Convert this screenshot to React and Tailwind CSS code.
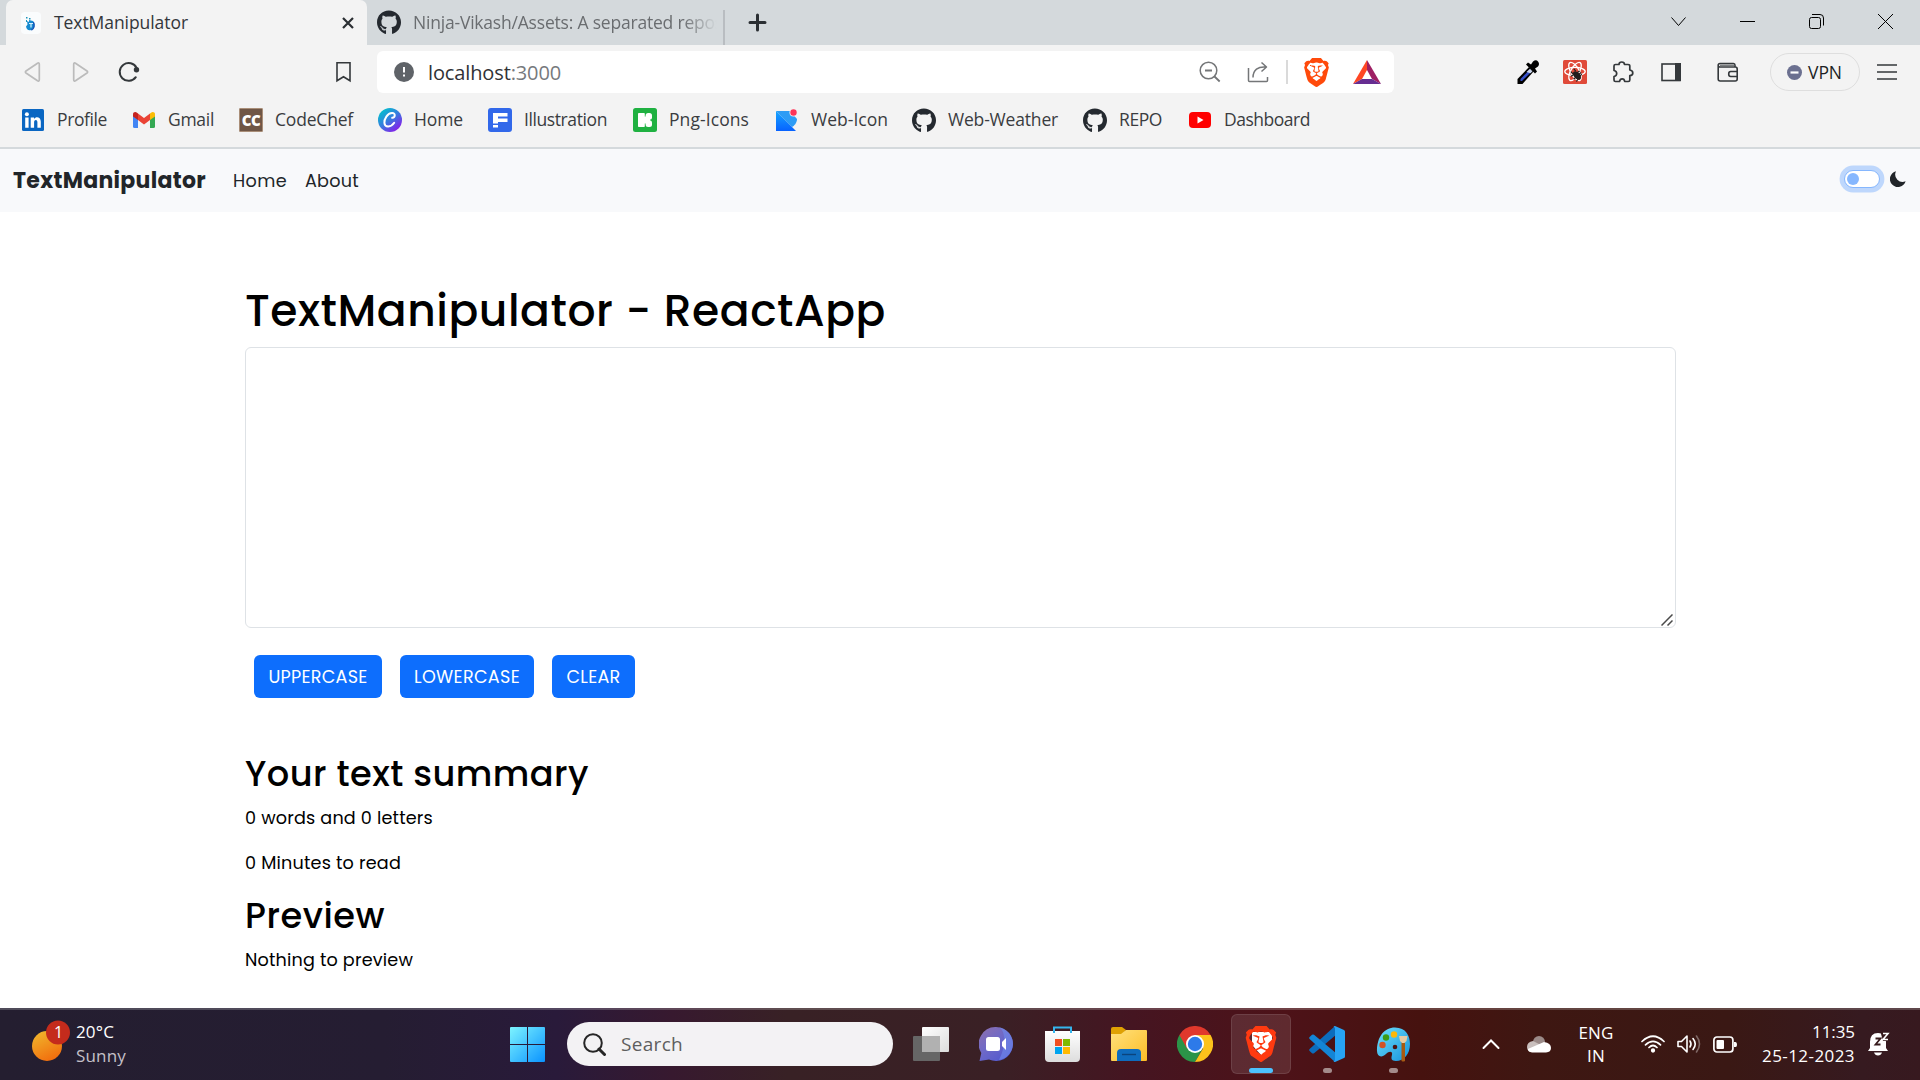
import { useLayoutEffect, useRef, useState } from "react";
import { FaGithub } from "react-icons/fa";
import { SiBrave } from "react-icons/si";

/* Single-line label whose tracking is adjusted so that its run is w px wide. */
function Label({ w, className = "", children }) {
  const ref = useRef(null);
  const [spacing, setSpacing] = useState(0);
  useLayoutEffect(() => {
    const natural = ref.current.getBoundingClientRect().width;
    setSpacing((w - natural) / ref.current.textContent.length);
  }, [w]);
  return (
    <span ref={ref} className={`inline-block shrink-0 whitespace-nowrap ${className}`} style={{ letterSpacing: spacing }}>
      {children}
    </span>
  );
}

function TabStrip() {
  return (
    <div className="flex h-[45px] bg-[#d4d9dc] pl-[6px]">
      <div className="flex w-[361px] items-center rounded-t-[7px] bg-[#f3f3f3] pl-[15px]">
        <svg className="h-[22px] w-[20px]" viewBox="0 0 20 22">
          <rect width="20" height="22" rx="4" fill="#fafcfd" />
          <path d="M6 9l2 1V8l4 1c2 2 2 7-2 9-3 .8-4.500-1-5-3.500l1.500-2z" fill="#168bd0" />
          <path d="M8 11.500h4M10 11.500v4" stroke="#d6f2ff" strokeWidth="1.200" />
          <path d="M5 5h1.500v1.500H5zM8 6h1.500v1.500H8zM5 8h1v2H5z" fill="#1b94bb" />
          <path d="M12.300 10c1.700 3 1 6.500-2 8" stroke="#1456b8" strokeWidth="1.500" fill="none" />
        </svg>
        <Label w={134} className="ml-[13px] pb-px text-[17.5px] leading-6 font-medium text-[#33373b]">TextManipulator</Label>
        <svg className="ml-[154px] h-3 w-3" viewBox="0 0 12 12" stroke="#2b2f33" strokeWidth="2.200"><path d="M1 1l10 10M11 1L1 11" /></svg>
      </div>
      <div className="flex w-[358px] items-center border-r-2 border-[#b9bdc1] bg-[#d4d9dc] pl-[10px] [border-image:linear-gradient(transparent_24%,#b9bdc1_24%)_1]">
        <FaGithub className="h-[25px] w-[24px] shrink-0 text-[#24292f]" />
        <div className="ml-3 w-[310px] shrink-0 [mask-image:linear-gradient(90deg,#000_87%,transparent_98%)]">
          <Label w={310} className="text-[17.5px] leading-6 text-[#6a6d70]">Ninja-Vikash/Assets: A separated repos</Label>
        </div>
      </div>
      <svg className="mt-[13px] ml-[23px] h-[19px] w-[19px]" viewBox="0 0 19 19" stroke="#2b2f33" strokeWidth="3" strokeLinecap="round"><path d="M9.500 2v15M2 9.500h15" /></svg>
      <div className="mt-[13px] mr-[26px] ml-auto flex h-[17px] items-center text-black">
        <svg className="h-[17px] w-[17px]" viewBox="0 0 17 17" fill="none" stroke="currentColor"><path d="M1.500 4.500l7 8 7-8" /></svg>
        <svg className="ml-[52px] h-[17px] w-[17px]" viewBox="0 0 17 17" stroke="currentColor"><path d="M1 8.500h15" /></svg>
        <svg className="ml-[52px] h-[17px] w-[17px]" viewBox="0 0 17 17" fill="none" stroke="currentColor"><rect x="1.500" y="4.500" width="11" height="11" rx="2" /><path d="M4 1.500h8a3.500 3.500 0 0 1 3.500 3.500v7.500" /></svg>
        <svg className="ml-[52px] h-[17px] w-[17px]" viewBox="0 0 17 17" stroke="currentColor"><path d="M1 1l15 15M16 1L1 16" /></svg>
      </div>
    </div>
  );
}

function Toolbar() {
  return (
    <div className="flex h-[54px] items-center pl-[24px]">
      <svg className="h-[22px] w-[18px]" viewBox="0 0 18 22" fill="none" stroke="#bbb" strokeWidth="1.700" strokeLinejoin="round"><path d="M13.500 2.200L2 10c-.8.600-.8 1.400 0 2l11.500 7.800c1 .6 1.800.2 1.800-1V3.200c0-1.200-.8-1.600-1.800-1z" /></svg>
      <svg className="ml-[30px] h-[22px] w-[18px]" viewBox="0 0 18 22" fill="none" stroke="#bbb" strokeWidth="1.700" strokeLinejoin="round"><path d="M3.500 2.200L15 10c.8.600.8 1.400 0 2L3.500 19.800c-1 .6-1.800.2-1.800-1V3.200c0-1.200.8-1.600 1.800-1z" /></svg>
      <svg className="ml-[28px] h-[22px] w-[22px]" viewBox="0 0 22 22" fill="none"><path d="M17.800 16.200A8.900 8.900 0 1 1 18.600 7" stroke="#34383b" strokeWidth="2" strokeLinecap="round" /><circle cx="18.500" cy="8.800" r="2.700" fill="#34383b" /></svg>
      <svg className="ml-[195px] h-[22px] w-[17px]" viewBox="0 0 17 22" fill="none" stroke="#34383b" strokeWidth="1.600"><path d="M2 1.800h13v18l-6.500-4-6.500 4z" /></svg>
      <div className="ml-[25px] flex h-[42px] w-[1017px] items-center rounded-[6px] bg-white pl-[17px]">
        <svg className="h-5 w-5" viewBox="0 0 20 20"><circle cx="10" cy="10" r="10" fill="#5f6368" /><path d="M10 5v5.500M10 12.500v2" stroke="white" strokeWidth="2" /></svg>
        <Label w={133} className="ml-[14px] pt-px text-[20px] leading-7 text-[#303236]">localhost<span className="text-[#76797d]">:3000</span></Label>
        <svg className="ml-[638px] h-[22px] w-[22px]" viewBox="0 0 22 22" fill="none" stroke="#747678" strokeWidth="1.500"><circle cx="9.500" cy="9.500" r="8.300" /><path d="M6 9.500h7M15.500 15.500l5.200 5" strokeWidth="1.800" /></svg>
        <svg className="ml-[26px] h-[22px] w-[22px]" viewBox="0 0 22 22" fill="none" stroke="#747678" strokeWidth="1.500" strokeLinejoin="round"><path d="M1.500 7v12.500q0 1 1 1h17q1 0 1-1V16M6 16.500C6 9 11 5.200 19 6M14.500 1.500l5 4.500-5 4.500" /></svg>
        <div className="ml-[17px] h-6 w-[2px] bg-[#dadada]" />
        <SiBrave className="ml-[14px] h-[29px] w-[29px] text-[#ff4a0b]" />
        <svg className="ml-[22px] h-6 w-[28px]" viewBox="0 0 28 24"><path d="M14 0L0 24l9-5 5-9z" fill="#ff4724" /><path d="M14 0l14 24-9-5-5-9z" fill="#9e1f63" /><path d="M0 24h28l-9-5H9z" fill="#662d91" /></svg>
      </div>
      <svg className="ml-[122px] h-[25px] w-[24px]" viewBox="0 0 24 25"><path d="M1.500 24v-5L13 7l4.500 4.500L6.500 24z" fill="#000" /><path d="M4.500 21v-2L13 10.200l2 2L6 21z" fill="#3650c8" /><path d="M10.500 12l3.500-3.300 2.500 2.500-2 2z" fill="#cbd6ee" /><path d="M10 4.500l2-2 3 2 2-3q3-2.500 5 0t0 5l-3 2 2 3-2 2z" fill="#000" /></svg>
      <svg className="ml-[23px] h-6 w-6" viewBox="0 0 24 24"><rect width="24" height="24" rx="1.500" fill="#e04a39" /><g fill="none" stroke="white" strokeWidth="1.300"><ellipse cx="12" cy="11.500" rx="10.200" ry="4.200" /><ellipse cx="12" cy="11.500" rx="10.200" ry="4.200" transform="rotate(60 12 11.500)" /><ellipse cx="12" cy="11.500" rx="10.200" ry="4.200" transform="rotate(120 12 11.500)" /></g><g transform="rotate(-42 14 15.500)"><ellipse cx="14" cy="15.500" rx="3" ry="5" fill="#211e1e" /><path d="M9 12l10 2M9 16h10M9.500 19.500l9-2M12 8.500v3M16 8.500v3" stroke="#211e1e" strokeWidth="1.200" /></g></svg>
      <svg className="ml-[25px] h-[22px] w-[22px]" viewBox="0 0 22 22" fill="none" stroke="#34383b" strokeWidth="1.700" strokeLinejoin="round"><path d="M2 5q0-1.500 1.500-1.500H7q0-2.500 2.700-2.500t2.800 2.500H16q1.800 0 1.800 1.500V9q3 .5 3 2.900t-3 2.800V19q0 1.500-1.500 1.500h-3.600q-.3-2.700-2.500-2.700T7.500 20.500H3.500Q2 20.500 2 19v-3.500q2.700-.8 2.700-3.100T2 9.500z" /></svg>
      <svg className="ml-[27px] h-[20px] w-[20px]" viewBox="0 0 20 20"><rect x="1" y="2" width="18" height="16.500" fill="none" stroke="#34383b" strokeWidth="1.600" /><path d="M14 1h6v18h-6z" fill="#34383b" /></svg>
      <svg className="ml-[36px] h-[21px] w-[22px]" viewBox="0 0 22 21" fill="none" stroke="#34383b" strokeWidth="1.600"><path d="M18 5V3.200Q18 1.500 16.500 1.500H3Q1.200 1.500 1.200 3.200V17q0 2 2 2h15q2 0 2-2V7q0-2-2-2H3Q1.200 5 1.200 3.200M20.200 9.500h-6.500q-2 0-2 2.500t2 2.500h6.500" /><path d="M3 3.300h14" stroke="#7b7e80" /></svg>
      <div className="ml-[31px] flex h-[38px] w-[90px] items-center rounded-full border border-[#dedede] pl-[16px]">
        <svg className="h-[15px] w-[15px]" viewBox="0 0 15 15"><circle cx="7.500" cy="7.500" r="7.500" fill="#6b7090" /><path d="M3.500 7.500h8" stroke="white" strokeWidth="2.200" /></svg>
        <Label w={34} className="ml-[6px] text-[17.5px] leading-6 text-[#1d1f25]">VPN</Label>
      </div>
      <svg className="ml-[17px] h-4 w-5" viewBox="0 0 20 16" stroke="#34383b" strokeWidth="1.700"><path d="M0 1h20M0 8h20M0 15h20" /></svg>
    </div>
  );
}

const icon = "h-6 w-6 shrink-0";
const LinkedIn = () => (
  <svg className={icon} viewBox="0 0 24 24"><rect x="1" y="1" width="22" height="22" rx="1.500" fill="#0a66c2" /><g fill="white"><circle cx="5.900" cy="6.200" r="2" /><path d="M4.200 9.500h3.400v10.200H4.200zM9.700 9.500H13v1.400c2-2.700 6.800-2 6.800 2.800v6h-3.400v-5.500c0-3-3.300-2.700-3.300 0v5.500H9.700z" /></g></svg>
);
const Gmail = () => (
  <svg className={icon} viewBox="0 0 24 24"><path d="M1 7v11.500q0 1.500 1.500 1.500H6V10z" fill="#4285f4" /><path d="M18 10v10h3.500q1.500 0 1.500-1.500V7z" fill="#34a853" /><path d="M6 5.500l6 4.500 6-4.500V12l-6 4.500L6 12z" fill="#ea4335" /><path d="M1 6.500C1 4 3.500 3.500 5 4.700l1 .8V12L1 8.500z" fill="#c5221f" /><path d="M23 6.500c0-2.500-2.500-3-4-1.800l-1 .8V12l5-3.500z" fill="#fbbc04" /></svg>
);
const CodeChef = () => (
  <span className="flex h-6 w-6 shrink-0 items-center justify-center rounded-[1px] border border-[#a98e78] bg-[#6f5646] text-[15px] leading-none font-extrabold tracking-[-0.5px] text-white">CC</span>
);
const Canva = () => (
  <svg className={icon} viewBox="0 0 24 24"><defs><linearGradient id="canva" x1="0" y1="0" x2=".8" y2="1"><stop offset=".1" stopColor="#00c4cc" /><stop offset=".55" stopColor="#3a78e0" /><stop offset=".9" stopColor="#7d2ae8" /></linearGradient></defs><circle cx="12" cy="12" r="12" fill="url(#canva)" /><path d="M14.200 9.800c3.200-.3 3.600-5-.2-4.800C9.500 5.200 6 11 6.400 15c.5 5 6.600 4.500 9.800-.2" fill="none" stroke="white" strokeWidth="2" strokeLinecap="round" /></svg>
);
const Freepik = () => (
  <svg className={icon} viewBox="0 0 24 24"><rect width="24" height="24" rx="3" fill="#3268ea" /><path d="M5 5h14.500v3.500H10v2h9.500V14H10v1.500H5zM5 17h5v2.500H5z" fill="white" /></svg>
);
const Icons8 = () => (
  <svg className={icon} viewBox="0 0 24 24"><rect width="24" height="24" rx="2.500" fill="#1fb141" /><rect x="5" y="5" width="6.800" height="14" rx=".8" fill="white" /><rect x="12.600" y="5" width="6.400" height="6.800" rx="2.500" fill="white" /><rect x="12.600" y="12.200" width="6.400" height="6.800" rx="2.500" fill="white" /><path d="M11 8.500h6v7h-6z" fill="white" /></svg>
);
const WebIcon = () => (
  <svg className={icon} viewBox="0 0 24 24"><defs><linearGradient id="webi" x1="0" y1="0" x2="0" y2="1"><stop stopColor="#16a5ff" /><stop offset="1" stopColor="#0762ff" /></linearGradient></defs><path d="M1 3h14l7 8c0 4-3 7-5 8z" fill="#2d9cf5" /><path d="M1 3l20 20H1z" fill="url(#webi)" /><circle cx="18.500" cy="4.500" r="4" fill="#f3f3f3" /><circle cx="18.500" cy="4.500" r="3.200" fill="#ff3457" /></svg>
);
const GithubMark = () => <FaGithub className="h-[25px] w-6 shrink-0 text-[#24292f]" />;
const YouTube = () => (
  <svg className={icon} viewBox="0 0 24 24"><rect x="1" y="4" width="22" height="16" rx="4" fill="#f00" /><path d="M9.500 8.500v7l6-3.500z" fill="white" /></svg>
);

function Bookmark({ Icon, text, w, cell }) {
  return (
    <div className={`flex items-center ${cell}`}>
      <Icon />
      <Label w={w} className="ml-3 pb-[2px] text-[17.5px] leading-6 text-[#3a3c3f]">{text}</Label>
    </div>
  );
}

const bookmarks = [
  { Icon: LinkedIn, text: "Profile", w: 50, cell: "w-[111px]" },
  { Icon: Gmail, text: "Gmail", w: 46, cell: "w-[107px]" },
  { Icon: CodeChef, text: "CodeChef", w: 78, cell: "w-[139px]" },
  { Icon: Canva, text: "Home", w: 49, cell: "w-[110px]" },
  { Icon: Freepik, text: "Illustration", w: 83, cell: "w-[145px]" },
  { Icon: Icons8, text: "Png-Icons", w: 80, cell: "w-[142px]" },
  { Icon: WebIcon, text: "Web-Icon", w: 77, cell: "w-[137px]" },
  { Icon: GithubMark, text: "Web-Weather", w: 110, cell: "w-[171px]" },
  { Icon: GithubMark, text: "REPO", w: 43, cell: "w-[105px]" },
  { Icon: YouTube, text: "Dashboard", w: 86, cell: "w-[140px]" },
];

function Navbar() {
  return (
    <nav className="flex h-[63px] items-center bg-[#f8f9fb] pl-[13px] font-['Poppins','Inter',sans-serif] text-[#212529]">
      <Label w={193} className="text-[22px] leading-8 font-bold">TextManipulator</Label>
      <Label w={54} className="ml-[27px] text-[17.6px] leading-7 text-[#212529]">Home</Label>
      <Label w={54} className="ml-[18px] text-[17.6px] leading-7 text-[#212529]">About</Label>
      <div className="mb-[3px] ml-auto flex h-[18px] w-[36px] items-center rounded-full border border-[#86b7fe] bg-white pl-[2px] shadow-[0_0_0_4.400px_#bed7fc]">
        <span className="h-3 w-3 rounded-full bg-[#86b7fe]" />
      </div>
      <svg className="mr-[14px] mb-[3px] ml-[10px] h-4 w-4" viewBox="0 0 16 16"><path d="M6 .3a7.400 7.400 0 0 0 9.600 10A8 8 0 1 1 6 .3z" fill="#212529" /></svg>
    </nav>
  );
}

function Manipulator() {
  const button = "flex h-[43px] items-center justify-center rounded-[6px] bg-[#0d6efd] pt-px text-[17.6px] text-white";
  return (
    <main className="h-[796px] bg-white pt-[72px] pr-[244px] pl-[245px] font-['Poppins','Inter',sans-serif] text-black">
      <h1 className="flex h-[53px] items-center text-[44px] leading-[53px] font-medium"><Label w={641}>TextManipulator - ReactApp</Label></h1>
      <div className="relative mt-[10px]">
        <textarea className="block h-[281px] w-full resize-none rounded-[6px] border border-[#dee2e6] bg-white" />
        <svg className="absolute right-[3px] bottom-[2px] h-3 w-3" viewBox="0 0 12 12" stroke="#4a4a4a" strokeWidth="1.500"><path d="M.5 11.500l11-11M6.500 11.500l5-5" /></svg>
      </div>
      <div className="mt-[27px] flex gap-[18px] pl-[9px]">
        <button className={`${button} w-[128px]`}><Label w={99}>UPPERCASE</Label></button>
        <button className={`${button} w-[134px]`}><Label w={106}>LOWERCASE</Label></button>
        <button className={`${button} w-[83px]`}><Label w={54}>CLEAR</Label></button>
      </div>
      <h2 className="mt-[55px] flex h-[42px] text-[35.2px] leading-[42px] font-medium"><Label w={344}>Your text summary</Label></h2>
      <p className="mt-[10px] flex h-[26px] text-[17.6px] leading-[26px]"><Label w={188}>0 words and 0 letters</Label></p>
      <p className="mt-[19px] flex h-[26px] text-[17.6px] leading-[26px]"><Label w={156}>0 Minutes to read</Label></p>
      <h2 className="mt-[19px] flex h-[42px] text-[35.2px] leading-[42px] font-medium"><Label w={140}>Preview</Label></h2>
      <p className="mt-[10px] flex h-[26px] text-[17.6px] leading-[26px]"><Label w={168}>Nothing to preview</Label></p>
    </main>
  );
}

const app = "h-9 w-9 shrink-0";
function Taskbar() {
  return (
    <footer className="flex h-[72px] items-center border-t-2 border-white/20 bg-[linear-gradient(90deg,#241e30_0%,#251d32_20%,#291a3a_29%,#37192f_35%,#382125_41%,#3a2025_52%,#451521_59%,#4d1218_67%,#46120f_74%,#3e1712_80%,#3a1814_90%,#361a20_97%,#37191f_100%)] bg-origin-border pb-[2px] pl-[32px] text-white">
      <svg className="mb-[6px] h-[42px] w-[38px] shrink-0" viewBox="0 0 38 42"><defs><linearGradient id="sun" x1=".2" y1="0" x2=".7" y2="1"><stop stopColor="#f0b52c" /><stop offset="1" stopColor="#f26b0c" /></linearGradient></defs><circle cx="15" cy="26" r="15" fill="url(#sun)" /><circle cx="26" cy="12.500" r="12" fill="#c42b1c" /><text x="26.500" y="18" textAnchor="middle" fontSize="16" fill="white">1</text></svg>
      <div className="ml-[6px] flex w-[100px] flex-col items-start text-[17px] leading-6">
        <Label w={38}>20°C</Label>
        <Label w={50} className="text-[#c4c0c8]">Sunny</Label>
      </div>
      <svg className="ml-[334px] h-[35px] w-[35px] shrink-0" viewBox="0 0 35 35"><defs><linearGradient id="win" x1="0" y1="0" x2="1" y2="1"><stop stopColor="#7df4ff" /><stop offset="1" stopColor="#0a93ff" /></linearGradient></defs><path d="M0 1q0-1 1-1h16v17H0zM18 0h16q1 0 1 1v16H18zM0 18h17v17H1q-1 0-1-1zM18 18h17v16q0 1-1 1H18z" fill="url(#win)" /></svg>
      <div className="ml-[22px] flex h-11 w-[326px] shrink-0 items-center rounded-full bg-[#f3f2f4] pl-[16px]">
        <svg className="h-[23px] w-[23px]" viewBox="0 0 23 23" fill="none" stroke="#262626" strokeWidth="2"><circle cx="10" cy="10" r="8.800" /><path d="M16 16l5.500 5.500" strokeWidth="3" strokeLinecap="round" /></svg>
        <Label w={62} className="ml-[15px] text-[19px] leading-7 text-[#5e5e5e]">Search</Label>
      </div>
      <svg className="ml-[20px] h-[34px] w-9 shrink-0" viewBox="0 0 36 34"><defs><linearGradient id="tv" x1="0" y1="0" x2="1" y2="1"><stop stopColor="#fff" /><stop offset="1" stopColor="#dcdcdc" /></linearGradient></defs><rect y="9" width="27" height="25" rx="1" fill="#666" /><rect x="9" width="27" height="25" rx="1" fill="url(#tv)" /><path d="M9 9h18v16H9z" fill="#b1b1b1" /></svg>
      <svg className="ml-[30px] h-[34px] w-[34px] shrink-0" viewBox="0 0 34 34"><defs><linearGradient id="chat" x1="0" y1="0" x2=".8" y2="1"><stop stopColor="#8f6fac" /><stop offset=".5" stopColor="#6e69c8" /><stop offset="1" stopColor="#5058cf" /></linearGradient></defs><path d="M17 0a17 17 0 1 1-7 32.500L.5 34l1.800-8A17 17 0 0 1 17 0z" fill="url(#chat)" /><path d="M34 17A17 17 0 0 0 20 .3C28 5 26 22 20 33A17 17 0 0 0 34 17z" fill="#7089ea" opacity=".65" /><rect x="7" y="10" width="14" height="14" rx="2.500" fill="white" /><path d="M23 15l4-4v12l-4-4z" fill="white" /></svg>
      <svg className="ml-[32px] h-9 w-[35px] shrink-0" viewBox="0 0 35 36"><defs><linearGradient id="bag" x1="0" y1="0" x2="0" y2="1"><stop stopColor="#fff" /><stop offset="1" stopColor="#ddd" /></linearGradient></defs><path d="M0 5h35v27q0 4-4 4H4q-4 0-4-4z" fill="url(#bag)" /><path d="M9 7V1.500h17V7" fill="none" stroke="#35b5ed" strokeWidth="2" /><path d="M10 13h7v7h-7z" fill="#f25022" /><path d="M18 13h7v7h-7z" fill="#7fba00" /><path d="M10 21h7v7h-7z" fill="#00a4ef" /><path d="M18 21h7v7h-7z" fill="#ffb900" /></svg>
      <svg className="ml-[31px] h-[34px] w-9 shrink-0" viewBox="0 0 36 34"><defs><linearGradient id="fold" x1="0" y1="0" x2="1" y2="1"><stop stopColor="#ffe17d" /><stop offset="1" stopColor="#fcbd26" /></linearGradient></defs><path d="M0 2q0-2 2-2h9l4 3-4 5H0z" fill="#dfa103" /><path d="M0 7h10l5-4h20q1 0 1 1v29q0 1-1 1H1q-1 0-1-1z" fill="url(#fold)" /><path d="M6 34v-8q0-4 4-4h16q4 0 4 4v8z" fill="#0f6cbd" /><path d="M11 27.500h14" stroke="#0b447c" strokeWidth="1.400" /></svg>
      <svg className="ml-[30px] h-9 w-9 shrink-0" viewBox="0 0 36 36"><path d="M2.400 9A18 18 0 0 0 18 36l7.800-13.500L18 18z" fill="#2b9448" /><path d="M2.400 9L10 22.500 18 18l8-9h7.600A18 18 0 0 0 2.400 9z" fill="#e0382c" /><path d="M18 9h15.600A18 18 0 0 1 18 36l8-13.500z" fill="#fcc21b" /><circle cx="18" cy="18" r="9" fill="white" /><circle cx="18" cy="18" r="7.200" fill="#2d7ae9" /></svg>
      <div className="relative ml-[18px] flex h-[60px] w-[60px] shrink-0 items-center justify-center rounded-[6px] border border-white/10 bg-white/10">
        <svg className="absolute top-[16px] left-[19px] h-[26px] w-[22px]" viewBox="0 0 22 26"><path d="M1 1h20v13L11 25 1 14z" fill="white" /></svg>
        <SiBrave className="relative h-9 w-9 text-[#ff3a10]" />
        <span className="absolute bottom-0 left-[17px] h-[5px] w-6 rounded-full bg-[#4cc2ff]" />
      </div>
      <div className="relative ml-[18px] shrink-0">
        <svg className={app} viewBox="0 0 36 36"><path d="M26 0v9.800L5 27.200q-1 .7-2 0L.600 25q-1-1 0-2z" fill="#0c6dbd" /><path d="M26 36v-9.800L5 8.800q-1-.7-2 0L.600 11q-1 1 0 2z" fill="#1385d6" /><path d="M26 36q-1 0-1.500-1 1.500.5 1.500-1.500V2.500Q26 .500 24.500 1 25 0 26 0l9 4q1 .5 1 1.500v25q0 1-1 1.500z" fill="#27a3f4" /></svg>
        <span className="absolute top-[42px] left-[14px] h-[5px] w-[9px] rounded-full bg-[#a48b8b]" />
      </div>
      <div className="relative ml-[31px] shrink-0">
        <svg className="h-[35px] w-[35px]" viewBox="0 0 35 35"><defs><linearGradient id="pal" x1="0" y1="0" x2="1" y2="1"><stop stopColor="#6fe0fb" /><stop offset="1" stopColor="#1593dd" /></linearGradient></defs><path d="M19 .500C30 .500 34 9 34 17c0 10-6 17-14 17-5 0-5-3-4-6 1-4-3-4-6-1-4 4-9 3-9-3C1 10 8 .500 19 .500z" fill="url(#pal)" /><circle cx="10" cy="10.500" r="3.200" fill="#3d9b16" /><circle cx="18" cy="7.500" r="3.200" fill="#fcb80a" /><circle cx="6.500" cy="18" r="3.200" fill="#d25426" /><circle cx="19" cy="20" r="2.300" fill="#4d1413" /><path d="M25.500 14h3.500v20q-1.700 1-3.500 0z" fill="#a75b13" /><path d="M23 9h8.500l-1 5-2 2h-2.500l-2-2z" fill="#e6cba4" /></svg>
        <span className="absolute top-[41px] left-[13px] h-[5px] w-[9px] rounded-full bg-[#a48b8b]" />
      </div>
      <svg className="ml-[71px] h-4 w-[18px] shrink-0" viewBox="0 0 18 16" fill="none" stroke="white" strokeWidth="2"><path d="M1.500 12L9 4.500l7.500 7.500" strokeLinecap="round" /></svg>
      <svg className="ml-[27px] h-[17px] w-6 shrink-0" viewBox="0 0 24 17"><path d="M6 6a6 6 0 0 1 12 0l-6 5z" fill="#9b8b89" /><path d="M0 11q0-5 6-6l8 4-9 7Q0 15.500 0 11z" fill="#c9bfbd" /><path d="M5 16.500Q1 16 .8 13L17 6q7 1 7 6 0 4-5 4.500z" fill="white" /></svg>
      <div className="ml-[27px] flex w-[36px] shrink-0 flex-col items-center text-[17px] leading-[23px]"><Label w={35}>ENG</Label><Label w={18}>IN</Label></div>
      <svg className="ml-[27px] h-[18px] w-6 shrink-0" viewBox="0 0 24 18" fill="none" stroke="white" strokeWidth="1.700" strokeLinecap="round"><path d="M1 6.500q11-10.500 22 0M4.500 9.800q7.500-7 15 0M8 12.500q4-4 8 0" /><circle cx="12" cy="15.500" r="1.300" fill="white" /></svg>
      <svg className="ml-[12px] h-5 w-6 shrink-0" viewBox="0 0 24 20" fill="none" stroke="white" strokeWidth="1.600" strokeLinecap="round" strokeLinejoin="round"><path d="M1 7.500h3.500L10 2v16l-5.500-5.500H1zM13 7q2 3 0 6M16 4.500q4.500 5.500 0 11" /><path d="M19.500 2q6 8 0 16" opacity=".35" /></svg>
      <svg className="ml-[12px] h-[17px] w-6 shrink-0" viewBox="0 0 24 17"><rect x=".9" y="1" width="19" height="15" rx="3" fill="none" stroke="white" strokeWidth="1.700" /><rect x="3.500" y="4" width="7.500" height="9" rx="1" fill="white" /><path d="M21 6h1.500q1.500 0 1.500 2.500T22.500 11H21z" fill="white" /></svg>
      <div className="ml-[24px] flex w-[94px] shrink-0 flex-col items-end text-[17px] leading-6"><Label w={43}>11:35</Label><Label w={93}>25-12-2023</Label></div>
      <svg className="ml-[13px] h-6 w-[22px] shrink-0" viewBox="0 0 22 24"><path d="M0 19l2-3V10q0-9 8-9 8 0 8 9v6l2 3z" fill="white" /><path d="M6 20.500h8q-1 3-4 3t-4-3z" fill="white" /><path d="M7.500 6.500h5l-5 6h5" fill="none" stroke="#361a1c" strokeWidth="1.800" /><path d="M12.500 0H22v9h-7z" fill="#361a1c" /><path d="M15 1.500h5l-5 6h5" fill="none" stroke="white" strokeWidth="1.600" /></svg>
    </footer>
  );
}

export default function App() {
  return (
    <div className="h-[1080px] w-[1920px] overflow-hidden bg-white font-['Open_Sans','Noto_Sans',sans-serif]">
      <header className="h-[149px] border-b-2 border-[#d4d9dc] bg-[#f3f3f3]">
        <TabStrip />
        <Toolbar />
        <div className="flex h-[42px] items-center pl-[21px]">
          {bookmarks.map((b, i) => <Bookmark key={i} {...b} />)}
        </div>
      </header>
      <Navbar />
      <Manipulator />
      <Taskbar />
    </div>
  );
}
